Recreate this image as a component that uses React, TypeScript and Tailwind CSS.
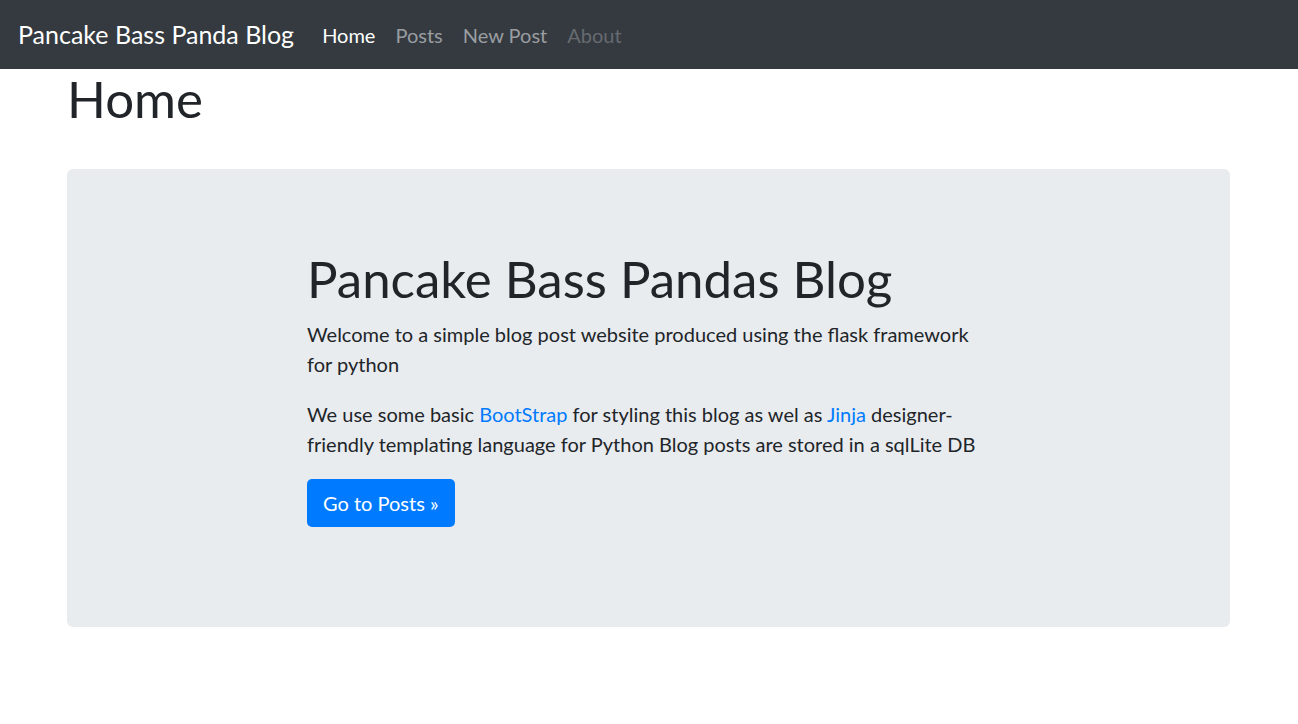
import React from "react";

const font = { fontFamily: '"Lato", "Open Sans", sans-serif' };

const NavBar = () => {
  const links = [
    { label: "Home", className: "text-white" },
    { label: "Posts", className: "text-[#9a9da0]" },
    { label: "New Post", className: "text-[#9a9da0]" },
    { label: "About", className: "text-[#676b70]" },
  ];
  return (
    <nav className="h-[69px] bg-[#343a40] flex items-center pl-[18px] pr-5">
      <a className="text-[25px] leading-[37px] text-white mr-[18px]">
        Pancake Bass Panda Blog
      </a>
      <ul className="flex items-center">
        {links.map((link) => (
          <li key={link.label}>
            <a className={`block px-[10px] text-[20px] leading-[30px] ${link.className}`}>
              {link.label}
            </a>
          </li>
        ))}
      </ul>
    </nav>
  );
};

const Jumbotron = () => (
  <div className="mt-[40px] bg-[#e9ecef] rounded-[6px] pt-[80px] pb-[80px] flex justify-center">
    <div className="w-[683px] text-[#212529]">
      <h1 className="text-[51px] leading-[60px] font-normal mb-[10px]">
        Pancake Bass Pandas Blog
      </h1>
      <p className="text-[20px] leading-[30px] mb-[20px] whitespace-nowrap">
        Welcome to a simple blog post website produced using the flask framework
        <br />
        for python
      </p>
      <p className="text-[20px] leading-[30px] mb-[20px] whitespace-nowrap">
        We use some basic <a className="text-[#007bff]">BootStrap</a> for styling
        this blog as wel as <a className="text-[#007bff]">Jinja</a> designer-
        <br />
        friendly templating language for Python Blog posts are stored in a sqlLite
        DB
      </p>
      <p className="mb-[20px]">
        <a className="inline-block bg-[#007bff] text-white text-[20px] leading-[30px] px-4 py-[9px] rounded-[5px]">
          Go to Posts &raquo;
        </a>
      </p>
    </div>
  </div>
);

export default function App() {
  return (
    <div className="min-h-[724px] bg-white" style={font}>
      <NavBar />
      <main className="w-[1163px] ml-[67px]">
        <h1 className="text-[51px] leading-[60px] font-normal text-[#212529]">Home</h1>
        <Jumbotron />
      </main>
    </div>
  );
}
